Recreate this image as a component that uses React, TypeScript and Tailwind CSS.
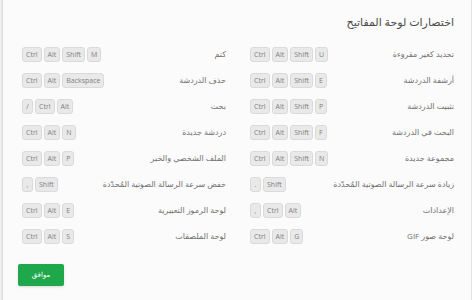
import React from "react";

type Shortcut = { label: string; keys: string[] };

// order is right column first (rtl grid), then left column, row by row
const shortcuts: Shortcut[] = [
  { label: "تحديد كغير مقروءة", keys: ["Ctrl", "Alt", "Shift", "U"] },
  { label: "كتم", keys: ["Ctrl", "Alt", "Shift", "M"] },
  { label: "أرشفة الدردشة", keys: ["Ctrl", "Alt", "Shift", "E"] },
  { label: "حذف الدردشة", keys: ["Ctrl", "Alt", "Backspace"] },
  { label: "تثبيت الدردشة", keys: ["Ctrl", "Alt", "Shift", "P"] },
  { label: "بحث", keys: ["/", "Ctrl", "Alt"] },
  { label: "البحث في الدردشة", keys: ["Ctrl", "Alt", "Shift", "F"] },
  { label: "دردشة جديدة", keys: ["Ctrl", "Alt", "N"] },
  { label: "مجموعة جديدة", keys: ["Ctrl", "Alt", "Shift", "N"] },
  { label: "الملف الشخصي والخبر", keys: ["Ctrl", "Alt", "P"] },
  { label: "زيادة سرعة الرسالة الصوتية المُحدّدة", keys: [".", "Shift"] },
  { label: "خفض سرعة الرسالة الصوتية المُحدّدة", keys: [",", "Shift"] },
  { label: "الإعدادات", keys: [",", "Ctrl", "Alt"] },
  { label: "لوحة الرموز التعبيرية", keys: ["Ctrl", "Alt", "E"] },
  { label: "لوحة صور GIF", keys: ["Ctrl", "Alt", "G"] },
  { label: "لوحة الملصقات", keys: ["Ctrl", "Alt", "S"] },
];

const Key = ({ k }: { k: string }) => (
  <span className="h-[15px] min-w-[11px] px-[3px] flex items-center justify-center rounded-[3px] border border-[#dadada] bg-[#e9e9e9] text-[7px] leading-none text-[#808080]">
    {k}
  </span>
);

export default function App() {
  return (
    <div
      className="w-[472px] h-[300px] flex bg-[#efefef] overflow-hidden"
      style={{ fontFamily: '"Open Sans", "DejaVu Sans", sans-serif' }}
    >
      <div className="w-[3px] bg-gradient-to-r from-[#f4f4f4] to-[#dadada]" />
      <div
        dir="rtl"
        className="flex-1 bg-[#fbfbfb] border-r border-[#e2e2e2] pt-[13px] pr-[17px] pl-[15px]"
      >
        {/* Title */}
        <h1 className="h-[18px] leading-[18px] text-[11px] font-normal text-[#4a4a4a]">
          اختصارات لوحة المفاتيح
        </h1>

        {/* Shortcuts */}
        <div className="mt-[10px] pl-[4px] grid grid-cols-2 gap-x-[24px]">
          {shortcuts.map((s) => (
            <div key={s.label} className="h-[26px] flex items-center justify-between">
              <span className="text-[8px] text-[#707070] whitespace-nowrap">{s.label}</span>
              <div dir="ltr" className="flex gap-[2px]">
                {s.keys.map((k, i) => (
                  <Key key={i} k={k} />
                ))}
              </div>
            </div>
          ))}
        </div>

        {/* Footer */}
        <div className="mt-[15px] flex justify-end">
          <button className="w-[46px] h-[22px] rounded-[2px] bg-[#1ea84b] text-white text-[7px] shadow-sm">
            موافق
          </button>
        </div>
      </div>
    </div>
  );
}
